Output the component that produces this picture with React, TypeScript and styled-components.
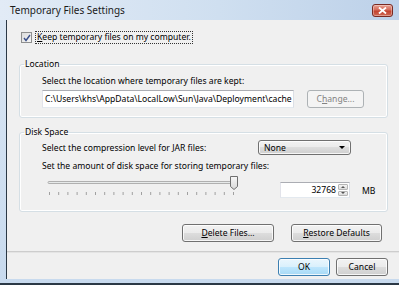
import React from "react";
import styled, { createGlobalStyle } from "styled-components";

const GlobalStyle = createGlobalStyle`
html, body {
  margin: 0;
  padding: 0;
}
body {
  width: 399px;
  height: 285px;
  overflow: hidden;
  background: #ffffff;
  font-family: "Noto Sans", "Open Sans", sans-serif;
  font-size: 8.6px;
  color: #000;
}
`;

const Window = styled.div`
width: 399px;
height: 285px;
box-sizing: border-box;
display: flex;
flex-direction: column;
background: linear-gradient(180deg, #dbe7f4 0%, #c8daee 100%);
border-bottom: 2px solid #2b3845;
`;

const TitleBar = styled.div`
height: 20px;
flex: none;
display: flex;
align-items: center;
justify-content: space-between;
padding: 0 6px 0 10px;
background: linear-gradient(90deg, #e2ebf6 0%, #cfdff0 55%, #bdd1e9 100%);
`;

const Title = styled.div`
font-size: 10px;
color: #1b1b1b;
`;

const CloseBtn = styled.div`
width: 21px;
height: 13px;
box-sizing: border-box;
border: 1px solid #7a2a22;
border-radius: 3px;
background: linear-gradient(180deg, #e8a193 0%, #d56b5a 45%, #c2412e 55%, #cf6a55 100%);
display: flex;
justify-content: center;
align-items: center;
box-shadow: inset 0 0 0 1px rgba(255, 255, 255, 0.35);
`;

const Client = styled.div`
flex: 1;
margin-left: 6px;
margin-bottom: 4px;
border-left: 1px solid #2b3845;
background: #f0f0f0;
display: flex;
flex-direction: column;
`;

const Main = styled.div`
flex: 1;
padding: 11px 11px 0 12px;
display: flex;
flex-direction: column;
`;

const CheckRow = styled.label`
display: flex;
align-items: center;
gap: 3px;
height: 13px;
padding-left: 2px;
`;

const CheckBox = styled.span`
width: 11px;
height: 11px;
box-sizing: border-box;
border: 1px solid #8e8f8f;
background: linear-gradient(135deg, #dcdcdc 0%, #f6f6f6 100%);
display: flex;
justify-content: center;
align-items: center;
`;

const FocusText = styled.span`
border: 1px dotted #333;
padding: 0 1px;
line-height: 11px;
`;

const Group = styled.fieldset<{ $top: number; $height: number }>`
margin: ${(p) => p.$top}px 0 0 0;
padding: 0;
height: ${(p) => p.$height}px;
box-sizing: border-box;
border: 1px solid #d5dfe5;
border-radius: 3px;
box-shadow: 0 0 0 1px #ffffff inset;
display: flex;
flex-direction: column;
`;

const Legend = styled.legend`
margin-left: 4px;
padding: 0 1px;
line-height: 12px;
`;

const Inner = styled.div`
padding: 0 0 0 22px;
display: flex;
flex-direction: column;
`;

const Label = styled.div<{ $top?: number }>`
margin-top: ${(p) => p.$top ?? 0}px;
line-height: 12px;
white-space: nowrap;
`;

const Row = styled.div<{ $top?: number; $align?: string }>`
margin-top: ${(p) => p.$top ?? 0}px;
display: flex;
align-items: ${(p) => p.$align ?? "center"};
`;

const TextField = styled.div<{ $width: number }>`
width: ${(p) => p.$width}px;
height: 18px;
box-sizing: border-box;
background: #fff;
border: 1px solid;
border-color: #abadb3 #dbdfe6 #e3e9ef #e2e3ea;
display: flex;
align-items: center;
padding: 0 2px;
white-space: nowrap;
overflow: hidden;
`;

const Button = styled.div<{ $width: number; $height?: number; $primary?: boolean; $disabled?: boolean }>`
width: ${(p) => p.$width}px;
height: ${(p) => p.$height ?? 18}px;
box-sizing: border-box;
border: 1px solid ${(p) => (p.$disabled ? "#adb2b5" : p.$primary ? "#3c7fb1" : "#707070")};
border-radius: 3px;
background: ${(p) =>
  p.$disabled
    ? "#f4f4f4"
    : p.$primary
    ? "linear-gradient(180deg, #eaf6fd 0%, #d9f0fc 50%, #bee6fd 50%, #a7d9f5 100%)"
    : "linear-gradient(180deg, #f2f2f2 0%, #ebebeb 50%, #dddddd 50%, #cfcfcf 100%)"};
box-shadow: inset 0 0 0 1px ${(p) => (p.$disabled ? "#f4f4f4" : "rgba(255,255,255,0.8)")};
color: ${(p) => (p.$disabled ? "#838383" : "#000")};
display: flex;
justify-content: center;
align-items: center;
flex: none;
`;

const Combo = styled(Button)`
justify-content: space-between;
padding: 0 5px 0 5px;
`;

const Arrow = styled.span`
width: 0;
height: 0;
border-left: 3px solid transparent;
border-right: 3px solid transparent;
border-top: 3px solid #000;
`;

const SpinBox = styled.div`
display: flex;
width: 70px;
height: 16px;
margin: 6px 0 0 40px;
box-sizing: border-box;
background: #fff;
border: 1px solid;
border-color: #abadb3 #dbdfe6 #e3e9ef #e2e3ea;
`;

const SpinValue = styled.div`
flex: 1;
display: flex;
align-items: center;
justify-content: flex-end;
padding-right: 2px;
`;

const SpinButtons = styled.div`
width: 10px;
display: flex;
flex-direction: column;
gap: 1px;
padding: 1px 1px 1px 0;
`;

const SpinBtn = styled.div<{ $up?: boolean }>`
flex: 1;
border: 1px solid #b5b5b5;
border-radius: 1px;
background: linear-gradient(180deg, #f4f4f4, #dcdcdc);
display: flex;
justify-content: center;
align-items: center;
&::after {
  content: "";
  border-left: 2px solid transparent;
  border-right: 2px solid transparent;
  ${(p) => (p.$up ? "border-bottom: 2px solid #555;" : "border-top: 2px solid #555;")}
}
`;

const SliderBox = styled.div`
margin-left: 4px;
height: 22px;
`;

const Unit = styled.div`
margin: 9px 0 0 12px;
line-height: 12px;
`;

const ButtonRow = styled.div<{ $top: number; $gap: number; $right: number }>`
margin-top: ${(p) => p.$top}px;
padding-right: ${(p) => p.$right}px;
display: flex;
justify-content: flex-end;
gap: ${(p) => p.$gap}px;
`;

const Separator = styled.div`
height: 2px;
flex: none;
background: #cdcdcd;
border-bottom: 1px solid #e4e4e4;
box-sizing: border-box;
`;

const Footer = styled.div`
height: 26px;
flex: none;
box-sizing: border-box;
padding: 5px 11px 0 0;
display: flex;
justify-content: flex-end;
gap: 6px;
`;

const Slider = () => {
  const ticks = Array.from({ length: 21 }, (_, i) => 3 + i * 9.2);
  return (
    <svg width="194" height="22" viewBox="0 0 194 22">
      <rect x="2" y="5.5" width="187" height="2" fill="#e7eaea" stroke="#b0b0b0" strokeWidth="1" rx="1" />
      {ticks.map((x) => (
        <line key={x} x1={x + 0.5} y1="16" x2={x + 0.5} y2="19" stroke="#a0a0a0" strokeWidth="1" />
      ))}
      <defs>
        <linearGradient id="thumb" x1="0" y1="0" x2="0" y2="1">
          <stop offset="0" stopColor="#f7f7f7" />
          <stop offset="1" stopColor="#d8d8d8" />
        </linearGradient>
      </defs>
      <path d="M184.5 0.5 H191.5 V10.5 L188 13.5 L184.5 10.5 Z" fill="url(#thumb)" stroke="#707070" strokeWidth="1" />
    </svg>
  );
};

const App = () => {
  return (
    <>
      <GlobalStyle />
      <Window>
        <TitleBar>
          <Title>Temporary Files Settings</Title>
          <CloseBtn>
            <svg width="9" height="7" viewBox="0 0 9 7">
              <path d="M1 0.5 L8 6.5 M8 0.5 L1 6.5" stroke="#fff" strokeWidth="1.8" />
            </svg>
          </CloseBtn>
        </TitleBar>
        <Client>
          <Main>
            <CheckRow>
              <CheckBox>
                <svg width="8" height="8" viewBox="0 0 8 8">
                  <path d="M1 4 L3 6.5 L7 1" fill="none" stroke="#3a4f8a" strokeWidth="1.4" />
                </svg>
              </CheckBox>
              <FocusText>
                <u>K</u>eep temporary files on my computer.
              </FocusText>
            </CheckRow>

            <Group $top={14} $height={60}>
              <Legend>Location</Legend>
              <Inner>
                <Label $top={5}>Select the location where temporary files are kept:</Label>
                <Row $top={3}>
                  <TextField $width={252}>C:\Users\khs\AppData\LocalLow\Sun\Java\Deployment\cache</TextField>
                  <Button $width={57} $disabled style={{ marginLeft: 13 }}>
                    C<u>h</u>ange...
                  </Button>
                </Row>
              </Inner>
            </Group>

            <Group $top={8} $height={86}>
              <Legend>Disk Space</Legend>
              <Inner>
                <Row $top={2}>
                  <Label style={{ width: 216 }}>Select the compression level for JAR files:</Label>
                  <Combo $width={93} $height={15}>
                    <span>None</span>
                    <Arrow />
                  </Combo>
                </Row>
                <Label $top={5}>Set the amount of disk space for storing temporary files:</Label>
                <Row $top={4} $align="flex-start">
                  <SliderBox>
                    <Slider />
                  </SliderBox>
                  <SpinBox>
                    <SpinValue>32768</SpinValue>
                    <SpinButtons>
                      <SpinBtn $up />
                      <SpinBtn />
                    </SpinButtons>
                  </SpinBox>
                  <Unit>MB</Unit>
                </Row>
              </Inner>
            </Group>

            <ButtonRow $top={12} $gap={17} $right={6}>
              <Button $width={92}>
                <span>
                  <u>D</u>elete Files...
                </span>
              </Button>
              <Button $width={91}>
                <span>
                  <u>R</u>estore Defaults
                </span>
              </Button>
            </ButtonRow>
          </Main>
          <Separator />
          <Footer>
            <Button $width={52} $primary>
              OK
            </Button>
            <Button $width={52}>Cancel</Button>
          </Footer>
        </Client>
      </Window>
    </>
  );
};

export default App;
